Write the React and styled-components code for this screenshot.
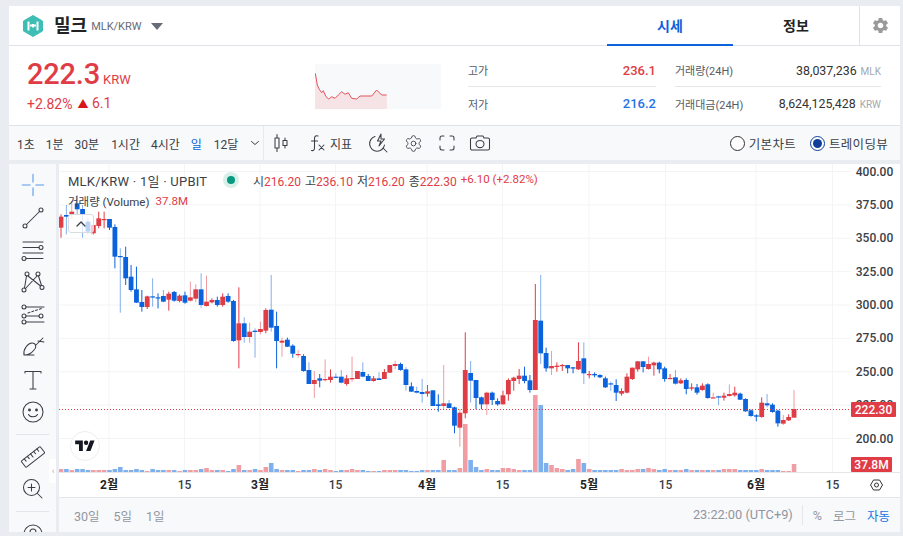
import React from 'react';
import styled, { createGlobalStyle } from 'styled-components';
import { MdSettings } from 'react-icons/md';
import { Settings } from 'lucide-react';

const FONT = `Roboto, "Noto Sans CJK KR", sans-serif`;
const RED = '#e03c46';
const BLUE = '#0a62dc';
const INK = '#3a3e47';

const Global = createGlobalStyle`
  html, body { margin: 0; padding: 0; background: #e9ecf1; height: 536px; overflow: hidden; }
  * { box-sizing: border-box; }
  body { font-family: ${FONT}; color: #333; }
`;

const Page = styled.div`
  width: 903px; height: 536px; padding: 6px 3px 4px 9px;
  display: flex; flex-direction: column; overflow: hidden;
`;
const Header = styled.header`
  height: 40px; flex: none; display: flex; align-items: center; background: #fff;
  border-bottom: 1px solid #dfe2e6; padding-left: 14px;
`;
const CoinName = styled.strong`font-size: 18px; font-weight: 700; color: #222; margin-left: 11px; line-height: 20px;`;
const Pair = styled.span`font-size: 11px; color: #666c78; margin-left: 4px; margin-top: 1px;`;
const Caret = styled.i`
  width: 0; height: 0; margin-left: 9px; margin-top: 1px;
  border-left: 6px solid transparent; border-right: 6px solid transparent; border-top: 7px solid #666c78;
`;
const Tabs = styled.nav`margin-left: auto; display: flex; height: 100%;`;
const Tab = styled.div`
  width: 126px; height: 40px; display: flex; align-items: center; justify-content: center;
  font-size: 14px; font-weight: 700; color: ${p => (p.$on ? '#0a62dc' : '#222')};
  border-bottom: 2px solid ${p => (p.$on ? '#0a62dc' : 'transparent')};
`;
const GearBox = styled.div`
  width: 41px; height: 39px; border-left: 1px solid #dfe2e6; display: flex; align-items: center; justify-content: center; color: #9a9a9a;
`;

const Info = styled.section`
  height: 80px; flex: none; background: #fff; display: flex; border-bottom: 1px solid #dfe2e6;
`;
const PriceCol = styled.div`width: 306px; padding: 10px 0 0 18px; color: ${RED};`;
const BigRow = styled.div`display: flex; align-items: baseline;`;
const BigPrice = styled.span`font-size: 29px; font-weight: 500; line-height: 36px; letter-spacing: -0.2px;`;
const Unit = styled.span`font-size: 13px; margin-left: 3px;`;
const Change = styled.div`font-size: 14px; line-height: 18px; margin-top: 2px; display: flex; gap: 5px; align-items: center;`;
const Tri = styled.span`font-size: 11px; color: #d8141c;`;
const Spark = styled.div`width: 126px; height: 45px; margin-top: 18px; background: #f8f9fb; flex: none;`;
const StatA = styled.div`width: 188px; margin-left: 27px; flex: none; padding-top: 8px;`;
const StatB = styled.div`width: 206px; margin-left: 19px; flex: none; padding-top: 8px;`;
const StatRow = styled.div`
  height: 33px; display: flex; align-items: center; justify-content: space-between;
  border-bottom: ${p => (p.$line ? '1px solid #e4e6ea' : '0')};
`;
const StatLabel = styled.span`font-size: 11px; color: #555b66;`;
const StatVal = styled.span`font-size: 13px; font-weight: 500; color: ${p => p.$c};`;
const VolVal = styled.span`font-size: 12.4px; color: #333;`;
const VolUnit = styled.small`font-size: 10px; color: #a4a8b0; margin-left: 4px;`;

const Toolbar = styled.div`
  height: 34px; flex: none; background: #f8f9fb; display: flex; align-items: center; color: ${INK};
`;
const Intervals = styled.div`
  width: 255px; height: 100%; flex: none; border-right: 1px solid #e8eaee; display: flex; align-items: center; padding-left: 8px;
`;
const Interval = styled.span`font-size: 12px; margin-right: ${p => p.$mr}px; color: ${p => (p.$on ? '#0a62dc' : INK)};`;
const ToolIcon = styled.div`display: flex; align-items: center; justify-content: center; width: 22px; height: 22px; margin-left: ${p => p.$ml}px; flex: none;`;
const IndLabel = styled.span`font-size: 12px; margin-left: 1px;`;
const Radios = styled.div`margin-left: auto; display: flex; align-items: center; padding-right: 12px;`;
const Radio = styled.i`
  width: 15px; height: 15px; border-radius: 50%; border: 1.2px solid ${p => (p.$on ? '#0f3f9a' : '#333')};
  display: flex; align-items: center; justify-content: center; margin-left: ${p => p.$ml}px; background: #fff;
  &::after { content: ''; width: 9px; height: 9px; border-radius: 50%; background: ${p => (p.$on ? '#0f3f9a' : 'transparent')}; }
`;
const RadioText = styled.span`font-size: 12.5px; margin-left: 4px; letter-spacing: .3px;`;

const ChartRow = styled.div`flex: 1; min-height: 0; display: flex; margin-top: 4px; gap: 3px;`;
const Side = styled.aside`
  width: 47px; flex: none; background: #f8f9fb; overflow: hidden; display: flex; flex-direction: column; align-items: center; padding-top: 5px; position: relative;
`;
const SideIcon = styled.div`height: 32.4px; flex: none; display: flex; align-items: center; justify-content: center; width: 100%;`;
const SideSep = styled.hr`width: 33px; height: 1px; border: 0; background: #e3e5ea; margin: 5.5px 0 5.8px; flex: none;`;
const Collapse = styled.div`
  position: absolute; right: -1px; top: 295px; width: 8px; height: 24px; background: #fff; border-radius: 3px 0 0 3px;
  display: flex; align-items: center; justify-content: center; font-size: 9px; color: #aab; 
`;
const Pane = styled.div`flex: 1; min-width: 0; display: flex; flex-direction: column; background: #fff;`;
const Plot = styled.div`height: 334px; flex: none; position: relative; overflow: hidden; border-bottom: 1px solid #e4e6ea;`;
const Legend = styled.div`position: absolute; left: 9px; top: 7px; color: #3b3f48;`;
const LegendMain = styled.div`display: flex; align-items: center; height: 18px;`;
const Symbol = styled.span`font-size: 13px; width: 157px; letter-spacing: .25px;`;
const Dot = styled.i`
  width: 16px; height: 16px; border-radius: 50%; background: #d9f0ea; display: flex; align-items: center; justify-content: center; margin-left: -2px;
  &::after { content: ''; width: 8px; height: 8px; border-radius: 50%; background: #089981; }
`;
const OhlcGroup = styled.div`display: flex; gap: 4px; margin-left: 14px; font-size: 12px;`;
const Change24 = styled.span`font-size: 11.5px; line-height: 14px; color: ${RED};`;
const Red = styled.span`color: ${RED};`;
const LegendVol = styled.div`display: flex; gap: 6px; height: 18px; align-items: center; font-size: 11.5px; margin-top: 3px;`;
const Fold = styled.div`
  position: absolute; left: 9px; top: 50px; width: 26px; height: 19px; border: 1px solid #d9dbe2; border-radius: 3px;
  background: rgba(255,255,255,.72); display: flex; align-items: center; justify-content: center;
`;
const Watermark = styled.div`
  position: absolute; left: 11px; top: 267px; width: 30px; height: 30px; border-radius: 50%; background: #fff;
  border: 1px solid #eceef2; display: flex; align-items: center; justify-content: center;
`;
const Bottom = styled.footer`
  flex: 1; background: #f8f9fb; display: flex; align-items: center; padding: 0 10px 0 15px; font-size: 12.5px; color: #9298a2;
`;
const Range = styled.span`margin-right: 14px;`;
const Clock = styled.span`margin-left: auto; color: #8f959f; font-size: 12.8px; padding-right: 9px; border-right: 1px solid #e4e6ea; line-height: 20px;`;
const Opt = styled.span`margin-left: ${p => p.$ml}px; color: ${p => (p.$on ? '#1a73e0' : '#9298a2')};`;
const AxisText = styled.text`
  font-family: ${FONT}; font-size: 12px; fill: ${p => p.$c || '#3a3e47'}; font-weight: ${p => p.$w || 400}; text-anchor: ${p => p.$a || 'middle'};
`;

/* [wickTop, bodyTop, bodyBottom, wickBottom, r|b, lightWick] measured on 3x crops */
function conv(c, o) { return { wt: c[0] / 3 + o, bt: c[1] / 3 + o, bb: c[2] / 3 + o, wb: c[3] / 3 + o, up: c[4] === 'r', light: !!c[5] }; }
const A = [
  [148,155,188,218,'r'],[120,150,155,208,'b',1],[108,140,148,160,'r',1],[90,115,133,150,'b',1],[120,132,148,218,'b',1],[160,170,200,205,'b',1],[180,180,205,210,'r',1],
  [140,160,183,190,'r'],[140,162,164,190,'r'],[162,162,188,195,'b'],[178,186,275,310,'b'],[250,273,276,443,'b',1],[245,276,340,360,'b'],[300,335,375,380,'b'],[305,373,413,413,'b'],[375,411,426,440,'b'],
  [392,394,426,432,'r'],[340,394,397,425,'b',1],[385,397,400,430,'b'],[375,393,410,412,'b',1],[380,386,404,437,'r'],[378,381,407,410,'b'],[388,392,408,412,'r'],[380,391,413,416,'b'],
  [350,397,407,410,'r',1],[358,373,401,412,'r',1],[325,373,420,428,'b',1],[332,410,423,425,'r',1],[400,405,412,415,'r'],[395,405,420,425,'b'],[385,395,420,425,'r'],
].map(c => conv(c, 165));
const B = [
  [55,63,80,83,'b'],[75,78,198,200,'b'],[37,145,196,280,'r'],[127,145,186,203,'b',1],[143,170,186,203,'r',1],[160,167,171,248,'b',1],[140,162,171,178,'r',1],[100,105,167,175,'r'],
  [0,104,158,170,'b',1],[110,153,198,280,'b'],[188,197,203,245,'r',1],[188,194,215,216,'b'],[208,212,236,248,'b'],[225,237,240,248,'r',1],[238,243,288,290,'b'],
].map(c => conv(c, 275));
const C = [
  [277,300,342,342,'b',1],[303,330,342,384,'r',1],[312,325,332,352,'b'],[268,327,329,335,'r',1],[298,320,330,338,'r'],[310,320,323,325,'b',1],[300,320,338,340,'b',1],[315,325,342,347,'r'],[260,324,328,335,'r',1],
  [303,303,327,327,'r'],[277,306,320,322,'b',1],[312,318,333,333,'b'],[318,325,333,335,'r'],[307,325,330,330,'b',1],[297,306,327,327,'r'],[285,285,308,308,'r'],[272,282,288,298,'r',1],[278,282,300,302,'b'],[292,298,345,362,'b',1],
  [337,349,365,365,'b'],[350,363,368,370,'b',1],[327,366,372,398,'b',1],[345,364,371,380,'r'],[361,361,408,408,'b'],[373,403,408,425,'b'],[285,400,408,418,'r',1],[390,400,414,415,'b',1],[410,412,467,490,'b'],[418,428,473,530,'r',1],
  [187,300,430,445,'r'],[273,309,332,398,'b',1],[330,330,384,418,'b'],[380,382,403,418,'b'],[365,368,403,435,'r',1],[365,368,390,405,'b'],[385,393,403,407,'b'],[362,376,403,403,'r'],[325,330,373,392,'r'],[320,323,333,362,'r'],
  [297,317,327,342,'r'],[290,317,333,340,'b'],[315,331,360,368,'b'],[42,150,360,360,'r'],[15,152,250,282,'b',1],[233,249,295,305,'b'],[243,288,295,315,'r',1],[277,287,291,305,'r'],[282,285,287,303,'r'],[285,285,295,310,'b'],[291,292,295,310,'b'],
  [217,273,298,300,'r'],[217,265,310,342,'b',1],[303,312,315,325,'r'],[307,312,316,322,'b'],
].map(c => conv(c, 270));
const D = [
  [163,165,172,174,'b'],[170,175,202,204,'b'],[185,190,193,213,'b',1],[178,195,218,243,'b'],[205,213,221,227,'r'],[160,170,218,220,'r'],[143,143,177,180,'r'],[124,124,148,155,'r'],[124,124,141,157,'b'],[110,132,147,150,'r',1],
  [125,128,136,167,'r'],[125,128,148,160,'b'],[140,145,177,185,'b'],[162,174,177,177,'r'],[150,172,191,194,'b',1],[175,181,190,192,'r'],[175,180,207,223,'b'],[190,202,206,212,'r'],[192,202,218,224,'b'],[190,197,210,212,'r'],
  [190,193,234,236,'b'],[218,232,234,235,'r',1],[227,229,232,255,'b',1],[218,227,233,242,'r'],[193,222,228,230,'r',1],[200,218,226,230,'r'],[218,221,239,240,'b'],[235,237,274,275,'b'],[268,271,288,290,'b'],[283,286,290,304,'b'],
  [232,248,291,293,'r'],[222,250,256,262,'b',1],[250,254,276,278,'b'],[270,272,310,320,'b'],[285,300,311,315,'r',1],[283,291,301,303,'r'],[210,267,293,293,'r',1],
].map(c => conv(c, 320));
const CANDLES = [...A, ...B, ...C, ...D];
const VOL = [3,3,2,3,3,2,2,2,2,2,3,5,2,2,3,2,1,3,2,2,2,2,1,2,2,2,3,4,2,2,2,1,3,7,2,2,3,2,5,9,3,2,2,2,1,2,
  2,3,2,3,2,1,2,2,3,2,2,1,1,1,2,2,2,2,2,1,1,2,2,2,2,12,2,2,4,48,12,5,2,3,2,2,4,4,3,2,2,2,77,67,9,7,4,3,2,3,13,9,3,2,
  2,2,2,2,3,2,2,3,3,4,3,2,3,2,2,2,3,2,2,2,2,2,2,3,3,3,2,2,2,2,3,2,2,2,1,1,8];
const X = i => 61 + 5.39 * i;
const PRICES = ['400.00','375.00','350.00','325.00','300.00','275.00','250.00','225.00','200.00'];
const GY = PRICES.map((_, i) => 171.5 + 33.38 * i);
const GX = [109, 184.5, 260, 335.5, 427, 502.5, 589, 665.5, 756, 832.5];
const TIMES = [['2월',109,1],['15',184.5],['3월',260,1],['15',335.5],['4월',427,1],['15',502.5],['5월',589,1],['15',665.5],['6월',756,1],['15',832.5]];

const Chart = () => (
  <svg width="841" height="334" viewBox="59 164 841 334" style={{ display: 'block' }}>
    {GY.map(y => <line key={y} x1="59" x2="851" y1={y} y2={y} stroke="#f3f4f6" />)}
    {GX.map(x => <line key={x} x1={x} x2={x} y1="164" y2="472" stroke="#f3f4f6" />)}
    {CANDLES.map((c, i) => {
      const color = c.up ? RED : BLUE;
      return (
        <g key={i}>
          <rect x={X(i) - 2.3} width="4.6" y={472 - VOL[i]} height={VOL[i]} fill={c.up ? '#f09ea3' : '#7fb0ee'} />
          <line x1={X(i)} x2={X(i)} y1={c.wt} y2={c.wb} stroke={color} strokeOpacity={c.light ? 0.5 : 1} />
          <rect x={X(i) - 2.4} width="4.8" y={c.bt} height={Math.max(c.bb - c.bt, 1.2)} fill={color} />
        </g>
      );
    })}
    <line x1="59" x2="851" y1="409.5" y2="409.5" stroke={RED} strokeDasharray="1 2" />
    <line x1="59" x2="900" y1="472.5" y2="472.5" stroke="#e4e6ea" />
    {PRICES.map((p, i) => <AxisText key={p} x="874.5" y={GY[i] + 4} $w="500">{p}</AxisText>)}
    <rect x="851" y="402" width="45" height="15" rx="1" fill={RED} />
    <AxisText x="873.5" y="414" $c="#fff" $w="500">222.30</AxisText>
    <rect x="851" y="457" width="41" height="15" rx="1" fill={RED} />
    <AxisText x="871.5" y="469" $c="#fff" $w="500">37.8M</AxisText>
    {TIMES.map(([t, x, b], i) => <AxisText key={i} x={x} y="489" $w={b ? 700 : 500} $c={b ? '#222' : '#3a3e47'}>{t}</AxisText>)}
    <path d="M870.5 485 L873.5 480 H879.5 L882.5 485 L879.5 490 H873.5 Z" fill="none" stroke="#333" />
    <circle cx="876.5" cy="485" r="2" fill="none" stroke="#333" />
  </svg>
);

const Sparkline = () => {
  const pts = [[946,220],[952,255],[958,268],[965,278],[970,272],[978,290],[986,297],[995,290],[1005,295],[1015,285],[1025,275],[1035,283],[1045,278],[1055,295],[1070,297],[1080,288],[1095,288],[1115,288],[1130,270],[1145,285],[1160,285]]
    .map(([x, y]) => [(x / 3 - 315).toFixed(1), (y / 3 - 64).toFixed(1)].join(','));
  return (
    <svg width="126" height="45" style={{ display: 'block' }}>
      <polygon points={`0,45 ${pts.join(' ')} 72,45`} fill="#f6e3e5" />
      <polyline points={pts.join(' ')} fill="none" stroke="#e2545c" strokeWidth="1" />
    </svg>
  );
};

const Ic = ({ w = 28, h = 28, children, sw = 1.05, c = INK }) => (
  <svg width={w} height={h} viewBox={`0 0 ${w} ${h}`} fill="none" stroke={c} strokeWidth={sw} strokeLinecap="round" strokeLinejoin="round">{children}</svg>
);
const Logo = () => (
  <svg width="20" height="22" viewBox="0 0 20 22">
    <path d="M10 0.5 L19.5 6 V16 L10 21.500 L0.5 16 V6 Z" fill="#3dbdb4" stroke="#3dbdb4" strokeLinejoin="round" />
    <path d="M5.500 6.500 V15.500 M14.500 6.500 V15.500 M7 10.500 H13 M10 9 V12.500" stroke="#fff" strokeWidth="2" fill="none" />
  </svg>
);

const Tools = {
  cross: <Ic c="#8ab8f0" sw={1.6}><path d="M3.500 14 H11 M17 14 H24.500 M14 3.500 V11 M14 17 V24.500" /></Ic>,
  line: <Ic><circle cx="6" cy="22" r="2" /><circle cx="22" cy="6" r="2" /><path d="M7.500 20.500 L20.500 7.500" /></Ic>,
  lines: <Ic><path d="M4 6 H24 M4 11.500 H20 M4 17 H24 M7 22.500 H24" /><circle cx="22" cy="11.500" r="2" /><circle cx="5" cy="22.500" r="2" /></Ic>,
  nodes: <Ic><circle cx="8" cy="6" r="2" /><circle cx="19" cy="6" r="2" /><circle cx="5" cy="22" r="2" /><circle cx="23" cy="19.500" r="2" /><path d="M7.500 8 L5.500 20 M9 8 L21.500 18 M18 8 L6.500 20.500 M19.500 8 L22.500 17.500" /></Ic>,
  fib: <Ic><circle cx="5" cy="6" r="2" /><path d="M7 6 H25" /><circle cx="5" cy="15" r="2" /><circle cx="22" cy="15" r="2" /><path d="M7 15 H20" /><circle cx="5" cy="21" r="2" /><path d="M7 21 H25" /><path d="M9 12 L24 7" strokeDasharray="2 2" /></Ic>,
  brush: <Ic><path d="M5 22 C4 16 9 10 13 10 C17 10 18 14 15 17 C12 21 9 22 5 22 H15" /><path d="M17 12 L24 5 M19 8 L25 9" /></Ic>,
  text: <Ic><path d="M6 7 V5.500 H22 V7 M14 5.500 V23 M11 23 H17" /></Ic>,
  smile: <Ic><circle cx="14" cy="14" r="10" /><circle cx="10.500" cy="12" r=".9" fill={INK} /><circle cx="17.500" cy="12" r=".9" fill={INK} /><path d="M9.500 16.500 C11 19.500 17 19.500 18.500 16.500" /></Ic>,
  ruler: <Ic><g transform="rotate(-38 14 14)"><rect x="2" y="10" width="24" height="8" rx="1" /><path d="M6 10 V13 M10 10 V13 M14 10 V14 M18 10 V13 M22 10 V13" /></g></Ic>,
  zoom: <Ic><circle cx="12.500" cy="12.500" r="8" /><path d="M12.500 9 V16 M9 12.500 H16 M18.500 18.500 L23 23" /></Ic>,
  magnet: <Ic><circle cx="14" cy="14" r="9" /><circle cx="14" cy="12" r="3" /></Ic>,
};

const App = () => (
  <Page>
    <Global />
    <Header>
      <Logo />
      <CoinName>밀크</CoinName>
      <Pair>MLK/KRW</Pair>
      <Caret />
      <Tabs>
        <Tab $on>시세</Tab>
        <Tab>정보</Tab>
        <GearBox><MdSettings size={19} /></GearBox>
      </Tabs>
    </Header>
    <Info>
      <PriceCol>
        <BigRow><BigPrice>222.3</BigPrice><Unit>KRW</Unit></BigRow>
        <Change><span>+2.82%</span><span><Tri>▲</Tri> 6.1</span></Change>
      </PriceCol>
      <Spark><Sparkline /></Spark>
      <StatA>
        <StatRow $line><StatLabel>고가</StatLabel><StatVal $c={RED}>236.1</StatVal></StatRow>
        <StatRow><StatLabel>저가</StatLabel><StatVal $c="#1f72e8">216.2</StatVal></StatRow>
      </StatA>
      <StatB>
        <StatRow $line><StatLabel>거래량(24H)</StatLabel><VolVal>38,037,236<VolUnit>MLK</VolUnit></VolVal></StatRow>
        <StatRow><StatLabel>거래대금(24H)</StatLabel><VolVal>8,624,125,428<VolUnit>KRW</VolUnit></VolVal></StatRow>
      </StatB>
    </Info>
    <Toolbar>
      <Intervals>
        <Interval $mr={11}>1초</Interval>
        <Interval $mr={11}>1분</Interval>
        <Interval $mr={12}>30분</Interval>
        <Interval $mr={11}>1시간</Interval>
        <Interval $mr={11}>4시간</Interval>
        <Interval $mr={12} $on>일</Interval>
        <Interval $mr={12}>12달</Interval>
        <Ic w={10} h={8} sw={1}><path d="M1.500 2.500 L5 5.500 L8.500 2.500" /></Ic>
      </Intervals>
      <ToolIcon $ml={6}>
        <Ic w={20} h={20}><path d="M6 1.500 V18.500 M14 5 V15" /><rect x="4" y="5" width="4" height="10" fill="#f8f9fb" /><rect x="12" y="7.500" width="4" height="5" fill="#f8f9fb" /></Ic>
      </ToolIcon>
      <ToolIcon $ml={15}>
        <Ic w={20} h={20}><path d="M10 3 C7 2 6.500 4 6.500 6 V15 C6.500 17 5.500 18 3.500 17.500 M3.500 8 H9.500 M11 12 L16 17 M16 12 L11 17" /></Ic>
      </ToolIcon>
      <IndLabel>지표</IndLabel>
      <ToolIcon $ml={15}>
        <Ic w={22} h={22}><path d="M8 4.500 A7.500 7.500 0 1 0 17.500 13 M16 16 L20 20" /><path d="M14 2 L10.500 9 H14 L12 14 L17.500 7 H14 Z" /></Ic>
      </ToolIcon>
      <ToolIcon $ml={13}><Settings size={19} strokeWidth={1.1} color={INK} /></ToolIcon>
      <ToolIcon $ml={12}>
        <Ic w={20} h={20}><path d="M3 7 V5 A2 2 0 0 1 5 3 H7 M13 3 H15 A2 2 0 0 1 17 5 V7 M17 13 V15 A2 2 0 0 1 15 17 H13 M7 17 H5 A2 2 0 0 1 3 15 V13" /></Ic>
      </ToolIcon>
      <ToolIcon $ml={11}>
        <Ic w={22} h={20}><path d="M3 5 H7 L8 3 H14 L15 5 H19 A1.500 1.500 0 0 1 20.500 6.500 V15.500 A1.500 1.500 0 0 1 19 17 H3 A1.500 1.500 0 0 1 1.500 15.500 V6.500 A1.500 1.500 0 0 1 3 5 Z" /><ellipse cx="11" cy="11" rx="4" ry="3.600" /></Ic>
      </ToolIcon>
      <Radios>
        <Radio />
        <RadioText>기본차트</RadioText>
        <Radio $on $ml={14} />
        <RadioText>트레이딩뷰</RadioText>
      </Radios>
    </Toolbar>
    <ChartRow>
      <Side>
        <SideIcon>{Tools.cross}</SideIcon>
        <SideIcon>{Tools.line}</SideIcon>
        <SideIcon>{Tools.lines}</SideIcon>
        <SideIcon>{Tools.nodes}</SideIcon>
        <SideIcon>{Tools.fib}</SideIcon>
        <SideIcon>{Tools.brush}</SideIcon>
        <SideIcon>{Tools.text}</SideIcon>
        <SideIcon>{Tools.smile}</SideIcon>
        <SideSep />
        <SideIcon>{Tools.ruler}</SideIcon>
        <SideIcon>{Tools.zoom}</SideIcon>
        <SideSep />
        <SideIcon>{Tools.magnet}</SideIcon>
        <Collapse>‹</Collapse>
      </Side>
      <Pane>
        <Plot>
          <Chart />
          <Legend>
            <LegendMain>
              <Symbol>MLK/KRW · 1일 · UPBIT</Symbol>
              <Dot />
              <OhlcGroup>
                <span>시<Red>216.20</Red></span>
                <span>고<Red>236.10</Red></span>
                <span>저<Red>216.20</Red></span>
                <span>종<Red>222.30</Red></span>
                <Change24>+6.10 (+2.82%)</Change24>
              </OhlcGroup>
            </LegendMain>
            <LegendVol><span>거래량 (Volume)</span><Red>37.8M</Red></LegendVol>
          </Legend>
          <Fold><Ic w={12} h={8} sw={1.3}><path d="M2 6 L6 2 L10 6" /></Ic></Fold>
          <Watermark>
            <svg width="20" height="12" viewBox="0 0 36 22" fill="#131722"><path d="M14 20H7V8H0V1h14v19zM28 20h-8L27.500 1h8L28 20z" /><circle cx="20" cy="5" r="4" /></svg>
          </Watermark>
        </Plot>
        <Bottom>
          <Range>30일</Range><Range>5일</Range><Range>1일</Range>
          <Clock>23:22:00 (UTC+9)</Clock>
          <Opt $ml={10}>%</Opt>
          <Opt $ml={11}>로그</Opt>
          <Opt $ml={11} $on>자동</Opt>
        </Bottom>
      </Pane>
    </ChartRow>
  </Page>
);

export default App;
